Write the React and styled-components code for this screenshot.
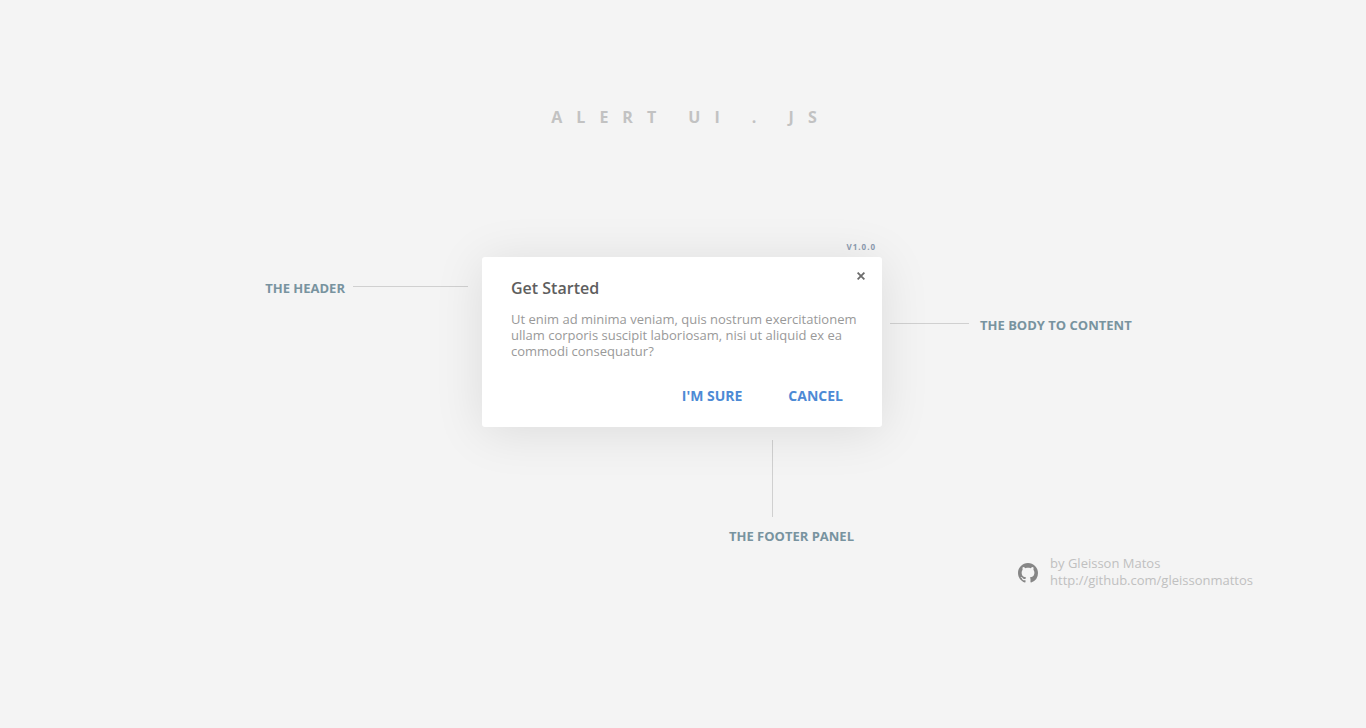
import React from "react";
import styled, { createGlobalStyle } from "styled-components";

const GlobalStyle = createGlobalStyle`
  * { box-sizing: border-box; }
  body {
    margin: 0;
    background: #f4f4f4;
    font-family: "Segoe UI", "Open Sans", "Noto Sans", sans-serif;
  }
`;

const Page = styled.main`
  min-height: 100vh;
  padding: 104px 2px 40px 0;
`;

const Title = styled.h1`
  margin: 0 0 113px;
  padding-left: 18px;
  text-align: center;
  font-size: 16px;
  line-height: 26px;
  font-weight: 700;
  letter-spacing: 14px;
  color: #c2c2c2;
`;

const Stage = styled.div`
  display: grid;
  grid-template-columns: minmax(0, 1fr) minmax(0, 400px) minmax(0, 1fr);
`;

const Version = styled.p`
  grid-column: 2;
  margin: 0;
  padding: 0 6px 6px 0;
  text-align: right;
  font-size: 8px;
  line-height: 8px;
  font-weight: 700;
  letter-spacing: 1px;
  color: #8c9bb0;
`;

const Note = styled.div`
  grid-row: 2;
  grid-column: ${(p) => (p.$side === "left" ? 1 : 3)};
  align-self: start;
  display: flex;
  align-items: center;
  justify-content: ${(p) => (p.$side === "left" ? "flex-end" : "flex-start")};
  gap: ${(p) => (p.$side === "left" ? 8 : 11)}px;
  padding: ${(p) => (p.$side === "left" ? "21px 14px 0 0" : "58px 0 0 8px")};
`;

const Label = styled.span`
  font-size: 13px;
  line-height: 20px;
  font-weight: 700;
  white-space: nowrap;
  color: #78939f;
`;

const Rule = styled.span`
  flex: none;
  width: ${(p) => p.$length}px;
  height: 1px;
  margin-bottom: 3px;
  background: #d0d0d0;
`;

const Dialog = styled.section`
  grid-row: 2;
  grid-column: 2;
  position: relative;
  padding: 20px 29px 16px;
  border-radius: 3px;
  background: #fff;
  box-shadow: 0 5px 50px rgba(0, 0, 0, 0.1);
`;

const DialogTitle = styled.h2`
  margin: 0 0 12px;
  font-size: 16px;
  line-height: 22px;
  font-weight: 600;
  color: #5e5e5e;
`;

const DialogText = styled.p`
  margin: 0 -16px 22px 0;
  font-size: 13px;
  line-height: 16px;
  color: #999;
`;

const CloseButton = styled.button`
  position: absolute;
  top: 10px;
  right: 12px;
  display: grid;
  place-items: center;
  width: 18px;
  height: 18px;
  padding: 0;
  border: 0;
  background: none;
  color: #6c6c6c;
  cursor: pointer;
`;

const Actions = styled.footer`
  display: flex;
  justify-content: flex-end;
  gap: 26px;
`;

const Action = styled.button`
  padding: 0 10px;
  border: 0;
  background: none;
  font-family: inherit;
  font-size: 14px;
  line-height: 30px;
  font-weight: 700;
  color: #4d8ad5;
  cursor: pointer;
`;

const FooterNote = styled.div`
  grid-row: 3;
  grid-column: 2;
  justify-self: end;
  display: flex;
  flex-direction: column;
  gap: 9px;
  padding: 13px 28px 0 0;
`;

const VerticalRule = styled.span`
  width: 1px;
  height: 77px;
  margin-left: 43px;
  background: #d0d0d0;
`;

const Credit = styled.footer`
  display: flex;
  align-items: center;
  justify-content: flex-end;
  gap: 12px;
  margin-top: 9px;
  padding-right: 111px;
  color: #c0c0c0;
`;

const CreditText = styled.div`
  display: flex;
  flex-direction: column;
  padding-bottom: 1px;
  font-size: 13px;
  line-height: 17px;
`;

const CreditLink = styled.a`
  color: inherit;
  text-decoration: none;
`;

export default function App() {
  return (
    <>
      <GlobalStyle />
      <Page>
        <Title>ALERT UI . JS</Title>
        <Stage>
          <Version>V1.0.0</Version>
          <Note $side="left">
            <Label>THE HEADER</Label>
            <Rule $length={115} />
          </Note>
          <Dialog role="dialog" aria-labelledby="dialog-title">
            <DialogTitle id="dialog-title">Get Started</DialogTitle>
            <DialogText>
              Ut enim ad minima veniam, quis nostrum exercitationem
              <br />
              ullam corporis suscipit laboriosam, nisi ut aliquid ex ea
              <br />
              commodi consequatur?
            </DialogText>
            <Actions>
              <Action type="button">I'M SURE</Action>
              <Action type="button">CANCEL</Action>
            </Actions>
            <CloseButton type="button" aria-label="Close">
              <svg width="8" height="8" viewBox="0 0 8 8" aria-hidden="true">
                <path d="M0.6 0.6 7.4 7.4M7.4 0.6 0.6 7.4" stroke="currentColor" strokeWidth="1.8" />
              </svg>
            </CloseButton>
          </Dialog>
          <Note $side="right">
            <Rule $length={79} />
            <Label>THE BODY TO CONTENT</Label>
          </Note>
          <FooterNote>
            <VerticalRule />
            <Label>THE FOOTER PANEL</Label>
          </FooterNote>
        </Stage>
        <Credit>
          <svg width="20" height="20" viewBox="0 0 16 16" fill="#868686" aria-hidden="true">
            <path d="M8 0C3.58 0 0 3.58 0 8c0 3.54 2.29 6.53 5.47 7.59.4.07.55-.17.55-.38 0-.19-.01-.82-.01-1.49-2.01.37-2.53-.49-2.69-.94-.09-.23-.48-.94-.82-1.13-.28-.15-.68-.52-.01-.53.63-.01 1.08.58 1.23.82.72 1.21 1.87.87 2.33.66.07-.52.28-.87.51-1.07-1.78-.2-3.64-.89-3.64-3.95 0-.87.31-1.59.82-2.15-.08-.2-.36-1.02.08-2.12 0 0 .67-.21 2.2.82.64-.18 1.32-.27 2-.27s1.36.09 2 .27c1.53-1.04 2.2-.82 2.2-.82.44 1.1.16 1.92.08 2.12.51.56.82 1.27.82 2.15 0 3.07-1.87 3.75-3.65 3.95.29.25.54.73.54 1.48 0 1.07-.01 1.93-.01 2.2 0 .21.15.46.55.38A8.01 8.01 0 0 0 16 8c0-4.42-3.58-8-8-8z" />
          </svg>
          <CreditText>
            <span>by Gleisson Matos</span>
            <CreditLink href="http://github.com/gleissonmattos">
              http://github.com/gleissonmattos
            </CreditLink>
          </CreditText>
        </Credit>
      </Page>
    </>
  );
}
